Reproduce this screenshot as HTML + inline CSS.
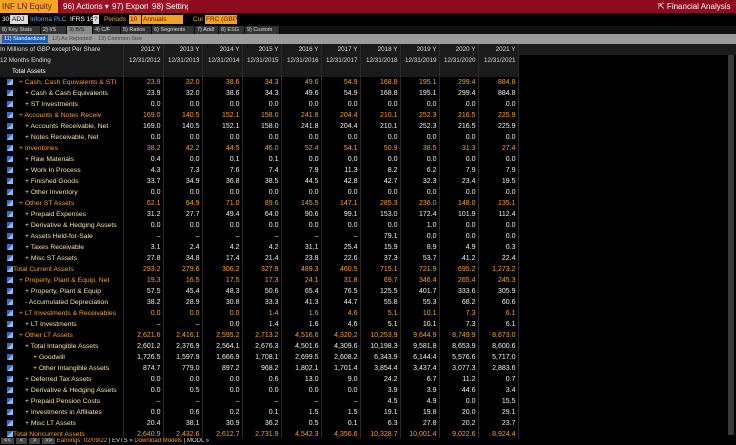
<!DOCTYPE html>
<html><head><meta charset="utf-8"><style>
*{margin:0;padding:0;box-sizing:border-box}
body{width:736px;height:444px;background:#000;overflow:hidden;font-family:"Liberation Sans Narrow","Liberation Sans",sans-serif;font-size:7px;color:#e8e8e8;position:relative}
.a{position:absolute;white-space:nowrap;overflow:hidden}
#top{left:0;top:0;width:736px;height:13px;background:#8c0b1e}
.tb{top:0;height:13px;line-height:13px;font-size:8px;color:#fff;padding:0 2px}
#r2{top:13px;left:0;width:736px;height:13px;background:#000}
.r2{top:15px;height:9px;line-height:9px;font-size:6.5px}
#r3{top:26px;left:0;width:736px;height:8px;background:#111}
.tab{top:26px;height:8px;line-height:8px;font-size:5.5px;color:#ddd;background:#333;padding:0 2px;border-right:1px solid #000}
#r4{top:34px;left:0;width:736px;height:10px;background:#9c9c9c}
table{position:absolute;left:0;top:44px;border-collapse:collapse;table-layout:fixed}
td{height:11px;line-height:11px;padding:0 2px 0 0;white-space:nowrap;overflow:hidden;text-align:right;border-right:1px solid #2a2a2a;color:#f2f0e6;font-size:7px}
td.l{text-align:left;padding:0;color:#f2e3a6;font-size:6.8px}
td.i{padding:0;border:none}
tr.h td{background:#1b1b1b;color:#ddd;font-size:6.3px}
tr.o td{color:#f4a020}
tr.o td.l{color:#f4a020}
.ic{display:inline-block;width:6px;height:6px;margin-left:4px;background:linear-gradient(135deg,#2d6fc7 50%,#8fb8ee 50%);vertical-align:middle}
.p1{padding-left:6px!important}.p2{padding-left:12px!important}.p3{padding-left:20px!important}
</style></head><body>
<div class="a" id="top"></div>
<div class="a tb" style="left:0;width:58px;background:#f6a623;color:#5a1a00">INF LN Equity</div>
<div class="a tb" style="left:61px;width:48px;background:#9c1126">96) Actions ▾</div>
<div class="a tb" style="left:110px;width:38px;background:#9c1126">97) Export ▾</div>
<div class="a tb" style="left:150px;width:38px;background:#9c1126">98) Settings</div>
<div class="a tb" style="left:656px;font-size:8px">⇱ Financial Analysis</div>
<div class="a" id="r2"></div>
<div class="a r2" style="left:2px;color:#fff">30</div>
<div class="a r2" style="left:10px;width:18px;background:#ddd;color:#000;padding:0 2px">ADJ</div>
<div class="a r2" style="left:30px;color:#4fb4ff">Informa PLC</div>
<div class="a r2" style="left:70px;color:#fff">IFRS 16</div>
<div class="a r2" style="left:93px;width:6px;background:#ddd;color:#000;padding:0 1px">?</div>
<div class="a r2" style="left:104px;color:#f4a020">Periods</div>
<div class="a r2" style="left:129px;width:12px;background:#f4a020;color:#6a2000;padding-left:1px">10</div>
<div class="a r2" style="left:142px;width:41px;background:#f4a020;color:#6a2000;padding-left:1px">Annuals</div>
<div class="a r2" style="left:193px;color:#f4a020">Cur</div>
<div class="a r2" style="left:205px;width:32px;background:#f4a020;color:#6a2000;padding-left:1px">FRC (GBP)</div>
<div class="a" id="r3"></div>
<div class="a tab" style="left:0;width:41px">8) Key Stats</div>
<div class="a tab" style="left:41px;width:26px">2) I/S</div>
<div class="a tab" style="left:67px;width:26px;background:#888;color:#111">3) B/S</div>
<div class="a tab" style="left:93px;width:28px">4) C/F</div>
<div class="a tab" style="left:121px;width:31px">5) Ratios</div>
<div class="a tab" style="left:152px;width:43px">6) Segments</div>
<div class="a tab" style="left:195px;width:24px">7) Addl</div>
<div class="a tab" style="left:219px;width:26px">8) ESG</div>
<div class="a tab" style="left:245px;width:35px">9) Custom</div>
<div class="a" id="r4"></div>
<div class="a" style="left:2px;top:35px;height:8px;line-height:8px;font-size:5.5px;background:#1f5fae;color:#fff;padding:0 2px;width:46px">11) Standardized</div>
<div class="a" style="left:52px;top:35px;height:8px;line-height:8px;font-size:5.5px;color:#444">12) As Reported</div>
<div class="a" style="left:98px;top:35px;height:8px;line-height:8px;font-size:5.5px;color:#444">13) Common Size</div>
<div class="a" style="left:518px;top:44px;width:218px;height:11px;background:#1b1b1b"></div>
<div class="a" style="left:728px;top:55px;width:6px;height:380px;background:#3a3a3a"></div>
<table>
<colgroup><col style="width:13px"><col style="width:110px"><col style="width:40px"><col style="width:39px"><col style="width:40px"><col style="width:39px"><col style="width:40px"><col style="width:39px"><col style="width:40px"><col style="width:39px"><col style="width:39px"><col style="width:40px"></colgroup>
<tr class="h"><td class="l" colspan="2" style="font-size:6.3px;color:#ddd">In Millions of GBP except Per Share</td><td>2012 Y</td><td>2013 Y</td><td>2014 Y</td><td>2015 Y</td><td>2016 Y</td><td>2017 Y</td><td>2018 Y</td><td>2019 Y</td><td>2020 Y</td><td>2021 Y</td></tr>
<tr class="h"><td class="l" colspan="2" style="font-size:6.3px;color:#ddd">12 Months Ending</td><td>12/31/2012</td><td>12/31/2013</td><td>12/31/2014</td><td>12/31/2015</td><td>12/31/2016</td><td>12/31/2017</td><td>12/31/2018</td><td>12/31/2019</td><td>12/31/2020</td><td>12/31/2021</td></tr>
<tr class="h"><td class="l" colspan="2" style="padding-left:12px;color:#fff">Total Assets</td><td></td><td></td><td></td><td></td><td></td><td></td><td></td><td></td><td></td><td></td></tr>
<tr class="o"><td class="i"><span class="ic"></span></td><td class="l p1">+ Cash, Cash Equivalents &amp; STI</td><td>23.9</td><td>32.0</td><td>38.6</td><td>34.3</td><td>49.6</td><td>54.9</td><td>168.8</td><td>195.1</td><td>299.4</td><td>884.8</td></tr>
<tr><td class="i"><span class="ic"></span></td><td class="l p2">+ Cash &amp; Cash Equivalents</td><td>23.9</td><td>32.0</td><td>38.6</td><td>34.3</td><td>49.6</td><td>54.9</td><td>168.8</td><td>195.1</td><td>299.4</td><td>884.8</td></tr>
<tr><td class="i"><span class="ic"></span></td><td class="l p2">+ ST Investments</td><td>0.0</td><td>0.0</td><td>0.0</td><td>0.0</td><td>0.0</td><td>0.0</td><td>0.0</td><td>0.0</td><td>0.0</td><td>0.0</td></tr>
<tr class="o"><td class="i"><span class="ic"></span></td><td class="l p1">+ Accounts &amp; Notes Receiv</td><td>169.0</td><td>140.5</td><td>152.1</td><td>158.0</td><td>241.8</td><td>204.4</td><td>210.1</td><td>252.3</td><td>216.5</td><td>225.9</td></tr>
<tr><td class="i"><span class="ic"></span></td><td class="l p2">+ Accounts Receivable, Net</td><td>169.0</td><td>140.5</td><td>152.1</td><td>158.0</td><td>241.8</td><td>204.4</td><td>210.1</td><td>252.3</td><td>216.5</td><td>225.9</td></tr>
<tr><td class="i"><span class="ic"></span></td><td class="l p2">+ Notes Receivable, Net</td><td>0.0</td><td>0.0</td><td>0.0</td><td>0.0</td><td>0.0</td><td>0.0</td><td>0.0</td><td>0.0</td><td>0.0</td><td>0.0</td></tr>
<tr class="o"><td class="i"><span class="ic"></span></td><td class="l p1">+ Inventories</td><td>38.2</td><td>42.2</td><td>44.5</td><td>46.0</td><td>52.4</td><td>54.1</td><td>50.9</td><td>38.5</td><td>31.3</td><td>27.4</td></tr>
<tr><td class="i"><span class="ic"></span></td><td class="l p2">+ Raw Materials</td><td>0.4</td><td>0.0</td><td>0.1</td><td>0.1</td><td>0.0</td><td>0.0</td><td>0.0</td><td>0.0</td><td>0.0</td><td>0.0</td></tr>
<tr><td class="i"><span class="ic"></span></td><td class="l p2">+ Work In Process</td><td>4.3</td><td>7.3</td><td>7.6</td><td>7.4</td><td>7.9</td><td>11.3</td><td>8.2</td><td>6.2</td><td>7.9</td><td>7.9</td></tr>
<tr><td class="i"><span class="ic"></span></td><td class="l p2">+ Finished Goods</td><td>33.7</td><td>34.9</td><td>36.8</td><td>38.5</td><td>44.5</td><td>42.8</td><td>42.7</td><td>32.3</td><td>23.4</td><td>19.5</td></tr>
<tr><td class="i"><span class="ic"></span></td><td class="l p2">+ Other Inventory</td><td>0.0</td><td>0.0</td><td>0.0</td><td>0.0</td><td>0.0</td><td>0.0</td><td>0.0</td><td>0.0</td><td>0.0</td><td>0.0</td></tr>
<tr class="o"><td class="i"><span class="ic"></span></td><td class="l p1">+ Other ST Assets</td><td>62.1</td><td>64.9</td><td>71.0</td><td>89.6</td><td>145.5</td><td>147.1</td><td>285.3</td><td>236.0</td><td>148.0</td><td>135.1</td></tr>
<tr><td class="i"><span class="ic"></span></td><td class="l p2">+ Prepaid Expenses</td><td>31.2</td><td>27.7</td><td>49.4</td><td>64.0</td><td>90.6</td><td>99.1</td><td>153.0</td><td>172.4</td><td>101.9</td><td>112.4</td></tr>
<tr><td class="i"><span class="ic"></span></td><td class="l p2">+ Derivative &amp; Hedging Assets</td><td>0.0</td><td>0.0</td><td>0.0</td><td>0.0</td><td>0.0</td><td>0.0</td><td>0.0</td><td>1.0</td><td>0.0</td><td>0.0</td></tr>
<tr><td class="i"><span class="ic"></span></td><td class="l p2">+ Assets Held-for-Sale</td><td>–</td><td>–</td><td>–</td><td>–</td><td>–</td><td>–</td><td>79.1</td><td>0.0</td><td>0.0</td><td>0.0</td></tr>
<tr><td class="i"><span class="ic"></span></td><td class="l p2">+ Taxes Receivable</td><td>3.1</td><td>2.4</td><td>4.2</td><td>4.2</td><td>31.1</td><td>25.4</td><td>15.9</td><td>8.9</td><td>4.9</td><td>0.3</td></tr>
<tr><td class="i"><span class="ic"></span></td><td class="l p2">+ Misc ST Assets</td><td>27.8</td><td>34.8</td><td>17.4</td><td>21.4</td><td>23.8</td><td>22.6</td><td>37.3</td><td>53.7</td><td>41.2</td><td>22.4</td></tr>
<tr class="o"><td class="i"><span class="ic"></span></td><td class="l" style="padding-left:0">Total Current Assets</td><td>293.2</td><td>279.6</td><td>306.2</td><td>327.9</td><td>489.3</td><td>460.5</td><td>715.1</td><td>721.9</td><td>695.2</td><td>1,273.2</td></tr>
<tr class="o"><td class="i"><span class="ic"></span></td><td class="l p1">+ Property, Plant &amp; Equip, Net</td><td>19.3</td><td>16.5</td><td>17.5</td><td>17.3</td><td>24.1</td><td>31.8</td><td>69.7</td><td>346.4</td><td>265.4</td><td>245.3</td></tr>
<tr><td class="i"><span class="ic"></span></td><td class="l p2">+ Property, Plant &amp; Equip</td><td>57.5</td><td>45.4</td><td>48.3</td><td>50.6</td><td>65.4</td><td>76.5</td><td>125.5</td><td>401.7</td><td>333.6</td><td>305.9</td></tr>
<tr><td class="i"><span class="ic"></span></td><td class="l p2">- Accumulated Depreciation</td><td>38.2</td><td>28.9</td><td>30.8</td><td>33.3</td><td>41.3</td><td>44.7</td><td>55.8</td><td>55.3</td><td>68.2</td><td>60.6</td></tr>
<tr class="o"><td class="i"><span class="ic"></span></td><td class="l p1">+ LT Investments &amp; Receivables</td><td>0.0</td><td>0.0</td><td>0.0</td><td>1.4</td><td>1.6</td><td>4.6</td><td>5.1</td><td>10.1</td><td>7.3</td><td>6.1</td></tr>
<tr><td class="i"><span class="ic"></span></td><td class="l p2">+ LT Investments</td><td>–</td><td>–</td><td>0.0</td><td>1.4</td><td>1.6</td><td>4.6</td><td>5.1</td><td>10.1</td><td>7.3</td><td>6.1</td></tr>
<tr class="o"><td class="i"><span class="ic"></span></td><td class="l p1">+ Other LT Assets</td><td>2,621.6</td><td>2,416.1</td><td>2,595.2</td><td>2,713.2</td><td>4,516.6</td><td>4,320.2</td><td>10,253.9</td><td>9,644.9</td><td>8,749.9</td><td>8,673.0</td></tr>
<tr><td class="i"><span class="ic"></span></td><td class="l p2">+ Total Intangible Assets</td><td>2,601.2</td><td>2,376.9</td><td>2,564.1</td><td>2,676.3</td><td>4,501.6</td><td>4,309.6</td><td>10,198.3</td><td>9,581.8</td><td>8,653.9</td><td>8,600.6</td></tr>
<tr><td class="i"><span class="ic"></span></td><td class="l p3">+ Goodwill</td><td>1,726.5</td><td>1,597.9</td><td>1,666.9</td><td>1,708.1</td><td>2,699.5</td><td>2,608.2</td><td>6,343.9</td><td>6,144.4</td><td>5,576.6</td><td>5,717.0</td></tr>
<tr><td class="i"><span class="ic"></span></td><td class="l p3">+ Other Intangible Assets</td><td>874.7</td><td>779.0</td><td>897.2</td><td>968.2</td><td>1,802.1</td><td>1,701.4</td><td>3,854.4</td><td>3,437.4</td><td>3,077.3</td><td>2,883.6</td></tr>
<tr><td class="i"><span class="ic"></span></td><td class="l p2">+ Deferred Tax Assets</td><td>0.0</td><td>0.0</td><td>0.0</td><td>0.6</td><td>13.0</td><td>9.0</td><td>24.2</td><td>6.7</td><td>11.2</td><td>0.7</td></tr>
<tr><td class="i"><span class="ic"></span></td><td class="l p2">+ Derivative &amp; Hedging Assets</td><td>0.0</td><td>0.5</td><td>0.0</td><td>0.0</td><td>0.0</td><td>0.0</td><td>3.9</td><td>3.9</td><td>44.6</td><td>3.4</td></tr>
<tr><td class="i"><span class="ic"></span></td><td class="l p2">+ Prepaid Pension Costs</td><td>–</td><td>–</td><td>–</td><td>–</td><td>–</td><td>–</td><td>4.5</td><td>4.9</td><td>0.0</td><td>15.5</td></tr>
<tr><td class="i"><span class="ic"></span></td><td class="l p2">+ Investments in Affiliates</td><td>0.0</td><td>0.6</td><td>0.2</td><td>0.1</td><td>1.5</td><td>1.5</td><td>19.1</td><td>19.8</td><td>20.0</td><td>29.1</td></tr>
<tr><td class="i"><span class="ic"></span></td><td class="l p2">+ Misc LT Assets</td><td>20.4</td><td>38.1</td><td>30.9</td><td>36.2</td><td>0.5</td><td>0.1</td><td>6.3</td><td>27.8</td><td>20.2</td><td>23.7</td></tr>
<tr class="o"><td class="i"><span class="ic"></span></td><td class="l" style="padding-left:0">Total Noncurrent Assets</td><td>2,640.9</td><td>2,432.6</td><td>2,612.7</td><td>2,731.9</td><td>4,542.3</td><td>4,356.6</td><td>10,328.7</td><td>10,001.4</td><td>9,022.6</td><td>8,924.4</td></tr>
</table>
<div class="a" style="left:0;top:438px;width:736px;height:6px;background:#000"></div>
<div class="a" style="left:1px;top:438px;height:7px;line-height:7px;font-size:6px;color:#ddd"><span style="background:#444;padding:0 3px">&lt;&lt;</span> <span style="background:#444;padding:0 4px">&lt;</span> <span style="background:#444;padding:0 4px">&gt;</span> <span style="background:#444;padding:0 3px">&gt;&gt;</span> <span style="color:#f4a020">Earnings: 02/09/22</span> | EVTS » <span style="color:#f4a020">Download Models</span> | MODL »</div>
</body></html>
